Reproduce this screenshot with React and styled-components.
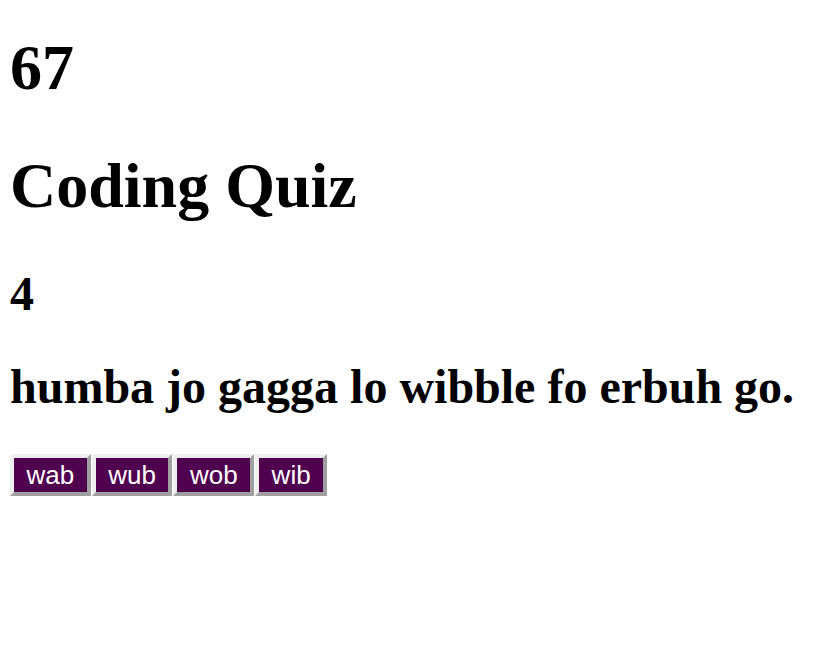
import React from 'react';
import styled, { createGlobalStyle } from 'styled-components';

const GlobalStyle = createGlobalStyle`
  body {
    margin: 0 10px;
    background: #ffffff;
    color: #000000;
    font-family: "Liberation Serif", "Times New Roman", serif;
  }
`;

const StyledQuiz = styled.div`
  display: flex;
  flex-direction: column;

  .timer {
    font-size: 64px;
    font-weight: bold;
    margin: 31px 0 44px 0;
  }
  .quiz-title {
    font-size: 64px;
    font-weight: bold;
    margin: 0 0 43px 0;
  }
  .question-number {
    font-size: 48px;
    font-weight: bold;
    margin: 0 0 38px 0;
  }
  .question-text {
    font-size: 48px;
    font-weight: bold;
    margin: 0 0 40px 0;
  }
`;

const Choices = styled.div`
  display: flex;
  gap: 1px;
`;

const ChoiceButton = styled.button`
  font-family: "Liberation Sans", Arial, sans-serif;
  font-size: 26px;
  line-height: normal;
  color: #ffffff;
  background: #4f004f;
  padding: 2px 12.5px 1px 12.5px;
  margin: 0;
  border-style: solid;
  border-width: 4px;
  border-color: #efefef #a0a0a0 #a0a0a0 #efefef;
  border-radius: 0;
  cursor: pointer;
`;

const answers = ['wab', 'wub', 'wob', 'wib'];

const App = () => {
  return (
    <>
      <GlobalStyle />
      <StyledQuiz>
        <h1 className="timer">67</h1>
        <h1 className="quiz-title">Coding Quiz</h1>
        <h2 className="question-number">4</h2>
        <h2 className="question-text">humba jo gagga lo wibble fo erbuh go.</h2>
        <Choices>
          {answers.map((answer) => (
            <ChoiceButton key={answer}>{answer}</ChoiceButton>
          ))}
        </Choices>
      </StyledQuiz>
    </>
  );
};

export default App;
